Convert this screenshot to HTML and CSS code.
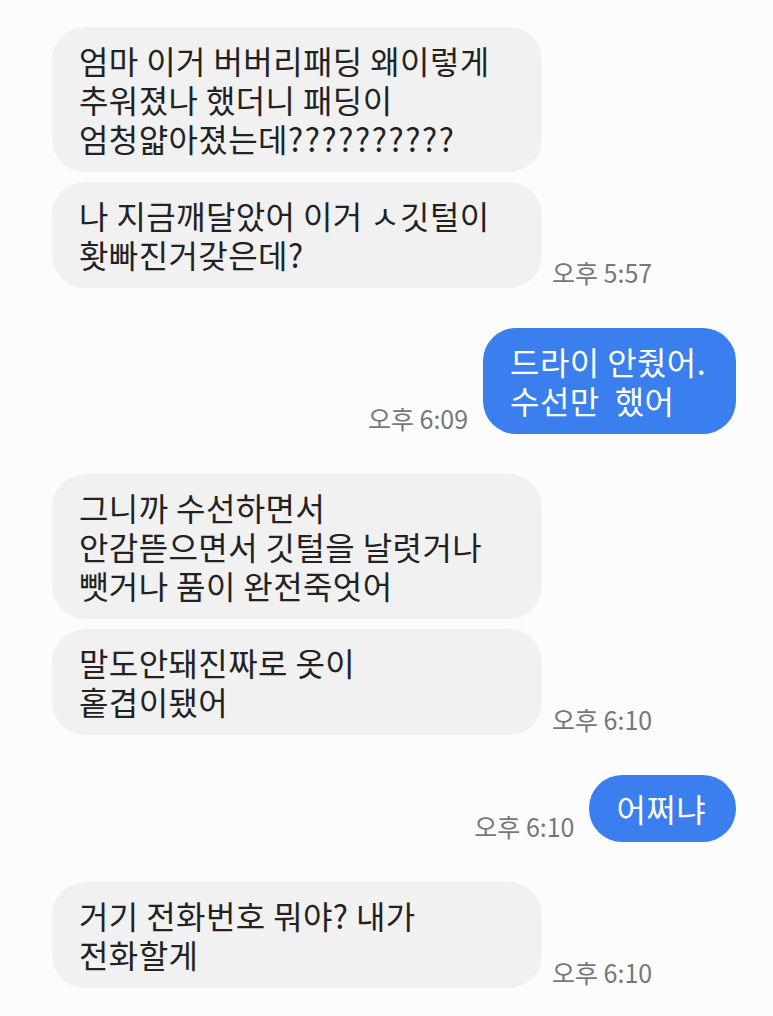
FILE: index.html
```html
<!DOCTYPE html>
<html>
<head>
    <meta charset="utf-8">
    <title>메시지</title>
    <link rel="stylesheet" href="styles.css">
</head>
<body>
    <div class="chat">
        <div class="group in">
            <div class="stack">
                <div class="bubble">엄마 이거 버버리패딩 왜이렇게<br>추워졌나 했더니 패딩이<br>엄청얇아졌는데<span class="wide">??????????</span></div>
                <div class="bubble">나 지금깨달았어 이거 ㅅ깃털이<br>홧빠진거갖은데?</div>
            </div>
            <span class="time">오후 5:57</span>
        </div>

        <div class="group out">
            <span class="time">오후 6:09</span>
            <div class="bubble">드라이 안줬어.<br>수선만&nbsp; 했어</div>
        </div>

        <div class="group in">
            <div class="stack">
                <div class="bubble">그니까 수선하면서<br>안감뜯으면서 깃털을 날렷거나<br>뺏거나 품이 완전죽엇어</div>
                <div class="bubble">말도안돼진짜로 옷이<br>홑겹이됐어</div>
            </div>
            <span class="time">오후 6:10</span>
        </div>

        <div class="group out">
            <span class="time">오후 6:10</span>
            <div class="bubble">어쩌냐</div>
        </div>

        <div class="group in">
            <div class="stack">
                <div class="bubble">거기 전화번호 뭐야? 내가<br>전화할게</div>
            </div>
            <span class="time">오후 6:10</span>
        </div>
    </div>
</body>
</html>
```

FILE: styles.css
```css
body {
    margin: 0;
    padding: 0;
    background-color: #fcfcfd;
    font-family: "Noto Sans CJK KR", "Noto Sans", sans-serif;
    color: #222;
}
.chat {
    display: flex;
    flex-direction: column;
    gap: 40px;
    padding: 27px 37px 0 52px;
}
.group {
    display: flex;
    align-items: flex-end;
}
.group.in {
    gap: 10px;
}
.group.out {
    justify-content: flex-end;
    gap: 15px;
}
.stack {
    display: flex;
    flex-direction: column;
    gap: 10px;
}
.bubble {
    font-size: 32px;
    line-height: 39px;
    letter-spacing: 0.4px;
    padding: 14px 30px 14px 27px;
    border-radius: 33px;
}
.wide {
    letter-spacing: 1.6px;
}
.in .bubble {
    width: 433px;
    background-color: #f1f1f1;
}
.out .bubble {
    background-color: #3b7eee;
    color: #fff;
}
.time {
    font-size: 25px;
    line-height: 28px;
    color: #777;
    margin-bottom: 2px;
    white-space: nowrap;
}
```
